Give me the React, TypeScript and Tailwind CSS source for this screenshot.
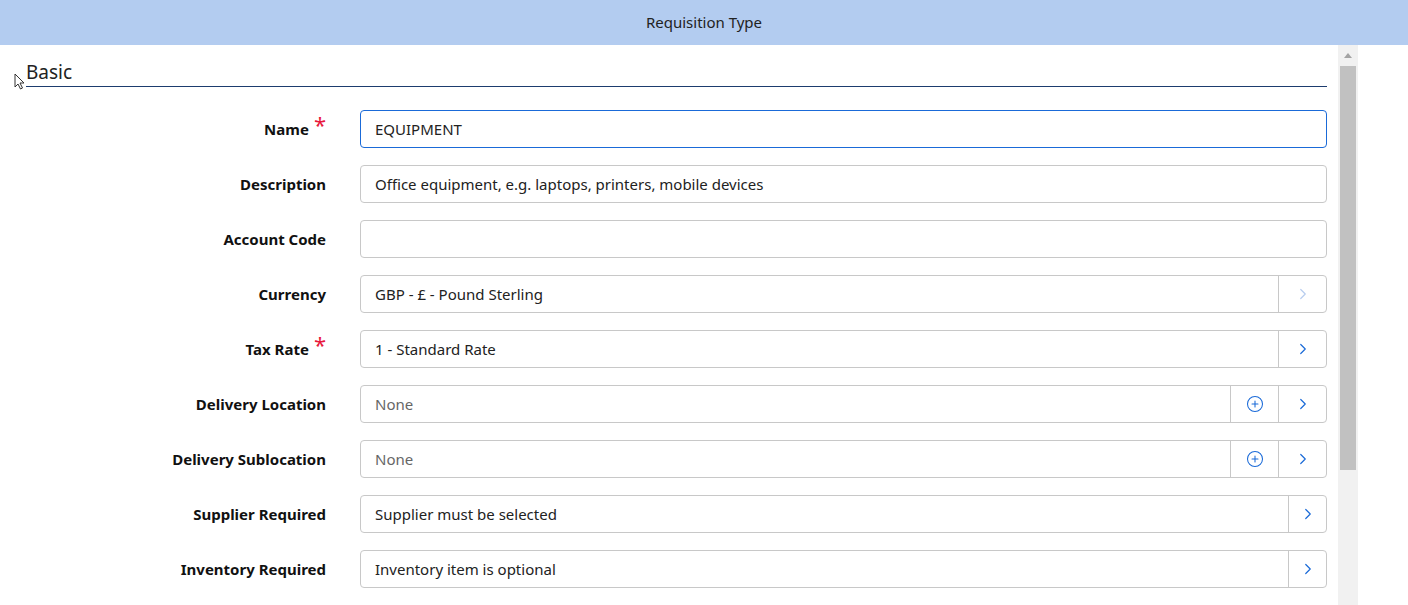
import { ChevronRight, CirclePlus } from "lucide-react";

type Row = {
  label: string;
  value: string;
  required?: boolean;
  focused?: boolean;
  placeholder?: boolean;
  buttons?: ("plus" | "chev" | "chevOff")[];
  narrow?: boolean;
};

const rows: Row[] = [
  { label: "Name", value: "EQUIPMENT", required: true, focused: true },
  { label: "Description", value: "Office equipment, e.g. laptops, printers, mobile devices" },
  { label: "Account Code", value: "" },
  { label: "Currency", value: "GBP - £ - Pound Sterling", buttons: ["chevOff"] },
  { label: "Tax Rate", value: "1 - Standard Rate", required: true, buttons: ["chev"] },
  { label: "Delivery Location", value: "None", placeholder: true, buttons: ["plus", "chev"] },
  { label: "Delivery Sublocation", value: "None", placeholder: true, buttons: ["plus", "chev"] },
  { label: "Supplier Required", value: "Supplier must be selected", buttons: ["chev"], narrow: true },
  { label: "Inventory Required", value: "Inventory item is optional", buttons: ["chev"], narrow: true },
];

export default function App() {
  return (
    <div className="h-[605px] w-[1408px] overflow-hidden bg-white font-['Roboto',sans-serif] text-[#222]">
      <div className="flex h-[45px] items-center justify-center bg-[#b3ccf0] text-[15px] text-[#222]">
        Requisition Type
      </div>
      <div className="flex h-[560px]">
        <div className="relative w-[1338px]">
          <svg className="absolute left-[14px] top-[28px]" width="12" height="18" viewBox="0 0 12 18">
            <path d="M1 1 L1 14 L4 11 L6.5 16 L8.5 15 L6 10 L10 10 Z" fill="white" stroke="#333" strokeWidth="1" />
          </svg>
          <div className="ml-[26px] mr-[11px] mt-[15px] border-b border-[#1d3c6e] pb-[2px] text-[19px] leading-[24px] text-[#222]">
            Basic
          </div>
          <div className="mt-[23px] flex flex-col gap-[17px]">
            {rows.map((r) => (
              <div key={r.label} className="flex h-[38px] items-center">
                <div className="flex w-[326px] items-center justify-end text-[15px] font-bold text-[#111]">
                  {r.label}
                  {r.required && <span className="ml-[5px] -mt-[10px] text-[22px] font-normal leading-none text-[#e8173c]">*</span>}
                </div>
                <div
                  className={`ml-[34px] flex h-[38px] w-[967px] overflow-hidden rounded-[4px] border ${
                    r.focused ? "border-[#1a6ad8]" : "border-[#c8c8c8]"
                  }`}
                >
                  <div className={`flex flex-1 items-center px-[14px] text-[15px] ${r.placeholder ? "text-[#666]" : "text-[#222]"}`}>
                    {r.value}
                  </div>
                  {r.buttons?.map((b, i) => (
                    <div
                      key={i}
                      className={`flex ${r.narrow ? "w-[38px]" : "w-[48px]"} items-center justify-center border-l border-[#c8c8c8]`}
                    >
                      {b === "plus" ? (
                        <CirclePlus size={18} strokeWidth={1.4} className="text-[#1a6ad8]" />
                      ) : (
                        <ChevronRight size={18} strokeWidth={1.6} className={b === "chevOff" ? "text-[#b8cdef]" : "text-[#1a6ad8]"} />
                      )}
                    </div>
                  ))}
                </div>
              </div>
            ))}
          </div>
        </div>
        <div className="flex w-[20px] flex-col bg-[#f1f1f1]">
          <div className="flex h-[21px] items-center justify-center">
            <div className="h-0 w-0 border-x-[4px] border-b-[5px] border-x-transparent border-b-[#a3a3a3]" />
          </div>
          <div className="mx-[2px] h-[404px] bg-[#c1c1c1]" />
        </div>
      </div>
    </div>
  );
}
